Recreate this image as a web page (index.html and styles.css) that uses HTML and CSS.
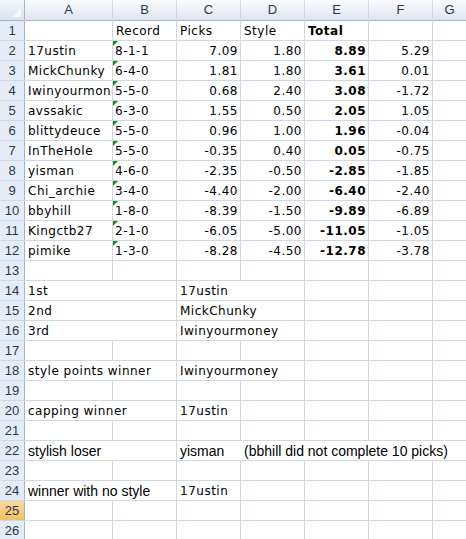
FILE: index.html
```html
<!DOCTYPE html>
<html>
<head>
<meta charset="utf-8">
<link rel="stylesheet" href="styles.css">
</head>
<body>
<div class="sheet">
  <div class="corner"><span class="corner-tri"></span></div>
  <div class="ch">A</div><div class="ch">B</div><div class="ch">C</div><div class="ch">D</div><div class="ch">E</div><div class="ch">F</div><div class="ch">G</div>

  <div class="rh">1</div><div class="c"></div><div class="c">Record</div><div class="c">Picks</div><div class="c">Style</div><div class="c b">Total</div><div class="c"></div><div class="c"></div>

  <div class="rh">2</div><div class="c">17ustin</div><div class="c tri">8-1-1</div><div class="c n">7.09</div><div class="c n">1.80</div><div class="c n b">8.89</div><div class="c n">5.29</div><div class="c"></div>
  <div class="rh">3</div><div class="c">MickChunky</div><div class="c tri">6-4-0</div><div class="c n">1.81</div><div class="c n">1.80</div><div class="c n b">3.61</div><div class="c n">0.01</div><div class="c"></div>
  <div class="rh">4</div><div class="c">Iwinyourmoney</div><div class="c tri">5-5-0</div><div class="c n">0.68</div><div class="c n">2.40</div><div class="c n b">3.08</div><div class="c n">-1.72</div><div class="c"></div>
  <div class="rh">5</div><div class="c">avssakic</div><div class="c tri">6-3-0</div><div class="c n">1.55</div><div class="c n">0.50</div><div class="c n b">2.05</div><div class="c n">1.05</div><div class="c"></div>
  <div class="rh">6</div><div class="c">blittydeuce</div><div class="c tri">5-5-0</div><div class="c n">0.96</div><div class="c n">1.00</div><div class="c n b">1.96</div><div class="c n">-0.04</div><div class="c"></div>
  <div class="rh">7</div><div class="c">InTheHole</div><div class="c tri">5-5-0</div><div class="c n">-0.35</div><div class="c n">0.40</div><div class="c n b">0.05</div><div class="c n">-0.75</div><div class="c"></div>
  <div class="rh">8</div><div class="c">yisman</div><div class="c tri">4-6-0</div><div class="c n">-2.35</div><div class="c n">-0.50</div><div class="c n b">-2.85</div><div class="c n">-1.85</div><div class="c"></div>
  <div class="rh">9</div><div class="c">Chi_archie</div><div class="c tri">3-4-0</div><div class="c n">-4.40</div><div class="c n">-2.00</div><div class="c n b">-6.40</div><div class="c n">-2.40</div><div class="c"></div>
  <div class="rh">10</div><div class="c">bbyhill</div><div class="c tri">1-8-0</div><div class="c n">-8.39</div><div class="c n">-1.50</div><div class="c n b">-9.89</div><div class="c n">-6.89</div><div class="c"></div>
  <div class="rh">11</div><div class="c">Kingctb27</div><div class="c tri">2-1-0</div><div class="c n">-6.05</div><div class="c n">-5.00</div><div class="c n b">-11.05</div><div class="c n">-1.05</div><div class="c"></div>
  <div class="rh">12</div><div class="c">pimike</div><div class="c tri">1-3-0</div><div class="c n">-8.28</div><div class="c n">-4.50</div><div class="c n b">-12.78</div><div class="c n">-3.78</div><div class="c"></div>

  <div class="rh">13</div><div class="c"></div><div class="c"></div><div class="c"></div><div class="c"></div><div class="c"></div><div class="c"></div><div class="c"></div>
  <div class="rh">14</div><div class="c s2">1st</div><div class="c s2">17ustin</div><div class="c"></div><div class="c"></div><div class="c"></div>
  <div class="rh">15</div><div class="c s2">2nd</div><div class="c s2">MickChunky</div><div class="c"></div><div class="c"></div><div class="c"></div>
  <div class="rh">16</div><div class="c s2">3rd</div><div class="c s2">Iwinyourmoney</div><div class="c"></div><div class="c"></div><div class="c"></div>
  <div class="rh">17</div><div class="c"></div><div class="c"></div><div class="c"></div><div class="c"></div><div class="c"></div><div class="c"></div><div class="c"></div>
  <div class="rh">18</div><div class="c s2">style points winner</div><div class="c s2">Iwinyourmoney</div><div class="c"></div><div class="c"></div><div class="c"></div>
  <div class="rh">19</div><div class="c"></div><div class="c"></div><div class="c"></div><div class="c"></div><div class="c"></div><div class="c"></div><div class="c"></div>
  <div class="rh">20</div><div class="c s2">capping winner</div><div class="c">17ustin</div><div class="c"></div><div class="c"></div><div class="c"></div><div class="c"></div>
  <div class="rh">21</div><div class="c"></div><div class="c"></div><div class="c"></div><div class="c"></div><div class="c"></div><div class="c"></div><div class="c"></div>
  <div class="rh">22</div><div class="c s2 cal">stylish loser</div><div class="c s5 split"><span class="colw cal">yisman</span><span class="cal">(bbhill did not complete 10 picks)</span></div>
  <div class="rh">23</div><div class="c"></div><div class="c"></div><div class="c"></div><div class="c"></div><div class="c"></div><div class="c"></div><div class="c"></div>
  <div class="rh">24</div><div class="c s2 cal">winner with no style</div><div class="c">17ustin</div><div class="c"></div><div class="c"></div><div class="c"></div><div class="c"></div>
  <div class="rh sel">25</div><div class="c"></div><div class="c"></div><div class="c"></div><div class="c"></div><div class="c"></div><div class="c"></div><div class="c"></div>
  <div class="rh">26</div><div class="c"></div><div class="c"></div><div class="c"></div><div class="c"></div><div class="c"></div><div class="c"></div><div class="c"></div>
</div>
</body>
</html>
```
FILE: styles.css
```css
html, body {
  margin: 0;
  padding: 0;
  background: #ffffff;
}

.sheet {
  display: grid;
  grid-template-columns: 24px 87px 63px 63px 63px 63px 63px 1fr;
  grid-template-rows: 20px repeat(26, 19px);
  gap: 1px;
  background: #d0d7e5;
  width: 466px;
  height: 539px;
  overflow: hidden;
  font-family: "DejaVu Sans", Verdana, sans-serif;
  font-size: 12px;
  color: #000;
}

.corner {
  position: relative;
  background: linear-gradient(#f3f6fa, #dce3ec);
  box-shadow: 1px 0 0 #9eb6ce, 0 1px 0 #9eb6ce;
}

.corner-tri {
  position: absolute;
  right: 3px;
  bottom: 3px;
  width: 9px;
  height: 9px;
  background: #f4f7fb;
  clip-path: polygon(100% 0, 100% 100%, 0 100%);
}

.ch {
  background: linear-gradient(#f9fbfd 0%, #eef2f7 45%, #dfe6ef 100%);
  box-shadow: 0 1px 0 #9eb6ce;
  font-family: "Liberation Sans", Arial, sans-serif;
  font-size: 13px;
  color: #27384f;
  text-align: center;
  line-height: 20px;
}

.rh {
  background: #e4ecf7;
  box-shadow: 1px 0 0 #9eb6ce;
  font-family: "Liberation Sans", Arial, sans-serif;
  font-size: 13px;
  color: #27384f;
  text-align: center;
  line-height: 19px;
}

.rh.sel {
  background: linear-gradient(#f9d99f, #f1c15f);
  color: #27384f;
}

.c {
  position: relative;
  background: #ffffff;
  padding: 2px 2px 0 3px;
  line-height: 17px;
  letter-spacing: 0.5px;
  white-space: nowrap;
  overflow: hidden;
}

.n {
  text-align: right;
  padding-right: 2px;
}

.b {
  font-weight: bold;
}

.tri {
  padding-left: 2px;
}

.tri::before {
  content: "";
  position: absolute;
  left: 0;
  top: 0;
  width: 5px;
  height: 5px;
  background: #1a8a1a;
  clip-path: polygon(0 0, 100% 0, 0 100%);
}

.s2 {
  grid-column: span 2;
}

.s5 {
  grid-column: span 5;
}

.split {
  display: flex;
  padding-left: 3px;
}

.colw {
  width: 64px;
  flex: none;
}

.cal {
  font-family: "Liberation Sans", Arial, sans-serif;
  font-size: 14px;
  letter-spacing: 0;
}
```
